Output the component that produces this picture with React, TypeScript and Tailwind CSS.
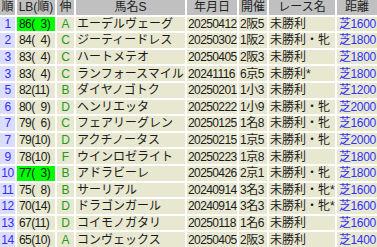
import React from "react";

type Row = {
  rank: string;
  lb: string;
  lbRank: string;
  green?: boolean;
  nobi: string;
  name: string;
  date: string;
  kaisai: string;
  race: string;
  dist: string;
};

const rows: Row[] = [
  { rank: "1", lb: "86", lbRank: "3", green: true, nobi: "A", name: "エーデルヴェーグ", date: "20250412", kaisai: "2阪5", race: "未勝利", dist: "芝1600" },
  { rank: "2", lb: "84", lbRank: "4", nobi: "C", name: "ジーティードレス", date: "20250302", kaisai: "1阪2", race: "未勝利・牝", dist: "芝1800" },
  { rank: "3", lb: "83", lbRank: "4", nobi: "C", name: "ハートメテオ", date: "20250405", kaisai: "2阪3", race: "未勝利", dist: "芝1800" },
  { rank: "3", lb: "83", lbRank: "4", nobi: "C", name: "ランフォースマイル", date: "20241116", kaisai: "6京5", race: "未勝利*", dist: "芝1800" },
  { rank: "5", lb: "82", lbRank: "11", nobi: "B", name: "ダイヤノゴトク", date: "20250201", kaisai: "1小3", race: "未勝利", dist: "芝1200" },
  { rank: "6", lb: "80", lbRank: "9", nobi: "D", name: "ヘンリエッタ", date: "20250222", kaisai: "1小9", race: "未勝利・牝", dist: "芝2000" },
  { rank: "7", lb: "79", lbRank: "6", nobi: "C", name: "フェアリーグレン", date: "20250125", kaisai: "1名8", race: "未勝利・牝", dist: "芝1600" },
  { rank: "7", lb: "79", lbRank: "10", nobi: "D", name: "アクチノータス", date: "20250215", kaisai: "1京5", race: "未勝利・牝", dist: "芝2000" },
  { rank: "9", lb: "78", lbRank: "10", nobi: "F", name: "ウインロゼライト", date: "20250223", kaisai: "1京8", race: "未勝利", dist: "芝1800" },
  { rank: "10", lb: "77", lbRank: "3", green: true, nobi: "B", name: "アドラビーレ", date: "20250426", kaisai: "2京1", race: "未勝利・牝", dist: "芝1800" },
  { rank: "11", lb: "75", lbRank: "8", nobi: "B", name: "サーリアル", date: "20240914", kaisai: "3名3", race: "未勝利・牝*", dist: "芝1600" },
  { rank: "12", lb: "70", lbRank: "14", nobi: "D", name: "ドラゴンガール", date: "20240914", kaisai: "3名3", race: "未勝利・牝*", dist: "芝1600" },
  { rank: "13", lb: "67", lbRank: "11", nobi: "D", name: "コイモノガタリ", date: "20250118", kaisai: "1名6", race: "未勝利", dist: "芝1600" },
  { rank: "14", lb: "65", lbRank: "10", nobi: "A", name: "コンヴェックス", date: "20250405", kaisai: "2阪3", race: "未勝利", dist: "芝1400" },
];

const headers = ["順", "LB(順)", "伸", "馬名S", "年月日", "開催", "レース名", "距離"];

export default function App() {
  return (
    <div
      className="w-[377px] h-[247px] overflow-hidden bg-white text-[12px] leading-none text-[#1a1a1a]"
      style={{ fontFamily: '"Liberation Sans", "Noto Sans CJK JP", sans-serif' }}
    >
      <div className="grid h-[247px] grid-cols-[15px_38px_17px_109px_50px_28px_66px_40px] grid-rows-[repeat(15,1fr)] gap-[2px]">
        {headers.map((h) => (
          <div key={h} className="flex items-center justify-center whitespace-nowrap bg-[#c0c0c0] text-[#222]">
            {h}
          </div>
        ))}
        {rows.map((r, i) => (
          <React.Fragment key={i}>
            <div className="flex items-center justify-center bg-[#dcdcff] text-[#3030ff] tracking-[-0.5px]">{r.rank}</div>
            <div className={`flex items-center pl-[2px] tracking-[-0.6px] ${r.green ? "bg-[#00ff00]" : "bg-[#e8e8d0]"}`}>
              {r.lb}(
              {r.lbRank.length < 2 && <span className="inline-block w-[6px]" />}
              {r.lbRank})
            </div>
            <div className="flex items-center justify-center bg-[#e8e8d0] text-[#1f9a1f]">{r.nobi}</div>
            <div className="flex items-center whitespace-nowrap bg-[#e8e8d0] pl-[1px]">{r.name}</div>
            <div className="flex items-center bg-[#e8e8d0] pl-[1px] tracking-[-0.6px]">{r.date}</div>
            <div className="flex items-center whitespace-nowrap bg-[#e8e8d0] pl-[1px] tracking-[-0.4px]">{r.kaisai}</div>
            <div className="flex items-center whitespace-nowrap bg-[#e8e8d0] pl-[1px]">{r.race}</div>
            <div className="flex items-center whitespace-nowrap bg-[#e8e8d0] pl-[2px] text-[#3030ff] tracking-[-0.4px]">{r.dist}</div>
          </React.Fragment>
        ))}
      </div>
    </div>
  );
}
